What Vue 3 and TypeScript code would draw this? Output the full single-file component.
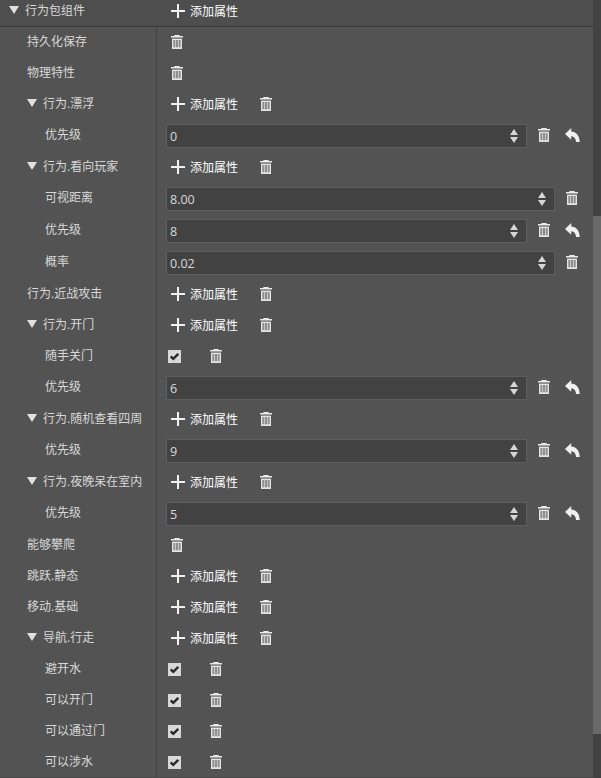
<script setup lang="ts">
type Kind = 'plain' | 'group' | 'check' | 'number'

interface Row {
  label: string
  level: 1 | 2
  kind: Kind
  open?: boolean
  value?: string
  revert?: boolean
}

const rows: Row[] = [
  { label: '持久化保存', level: 1, kind: 'plain' },
  { label: '物理特性', level: 1, kind: 'plain' },
  { label: '行为.漂浮', level: 1, kind: 'group', open: true },
  { label: '优先级', level: 2, kind: 'number', value: '0', revert: true },
  { label: '行为.看向玩家', level: 1, kind: 'group', open: true },
  { label: '可视距离', level: 2, kind: 'number', value: '8.00' },
  { label: '优先级', level: 2, kind: 'number', value: '8', revert: true },
  { label: '概率', level: 2, kind: 'number', value: '0.02' },
  { label: '行为.近战攻击', level: 1, kind: 'group' },
  { label: '行为.开门', level: 1, kind: 'group', open: true },
  { label: '随手关门', level: 2, kind: 'check' },
  { label: '优先级', level: 2, kind: 'number', value: '6', revert: true },
  { label: '行为.随机查看四周', level: 1, kind: 'group', open: true },
  { label: '优先级', level: 2, kind: 'number', value: '9', revert: true },
  { label: '行为.夜晚呆在室内', level: 1, kind: 'group', open: true },
  { label: '优先级', level: 2, kind: 'number', value: '5', revert: true },
  { label: '能够攀爬', level: 1, kind: 'plain' },
  { label: '跳跃.静态', level: 1, kind: 'group' },
  { label: '移动.基础', level: 1, kind: 'group' },
  { label: '导航.行走', level: 1, kind: 'group', open: true },
  { label: '避开水', level: 2, kind: 'check' },
  { label: '可以开门', level: 2, kind: 'check' },
  { label: '可以通过门', level: 2, kind: 'check' },
  { label: '可以涉水', level: 2, kind: 'check' },
]
</script>

<template>
  <svg class="defs" aria-hidden="true">
    <symbol id="trash" viewBox="0 0 12 14">
      <path d="M3.300 0h5.400v1H12v1.600H0V1h3.300z" fill="#ebebeb" />
      <path d="M1 3.600h10V14H1z" fill="#e4e4e4" />
      <path d="M2.600 5h1v7.200h-1zM4.800 5h.8v7.200h-.8zM6.400 5h.8v7.200h-.8zM8.400 5h1v7.200h-1z" fill="#555" />
    </symbol>
    <symbol id="plus" viewBox="0 0 14 14">
      <path d="M6 0h2v6h6v2H8v6H6V8H0V6h6z" fill="#f2f2f2" />
    </symbol>
    <symbol id="revert" viewBox="0 0 15 14">
      <path d="M0 5.900L6.200 0v3.400C11.200 3.700 14.700 7.500 14.700 14h-3.600C10.700 10.200 9.200 8.500 6.200 8.300v3.500z" fill="#f0f0f0" />
    </symbol>
    <symbol id="caret" viewBox="0 0 10 8">
      <path d="M0 0h10L5 8z" fill="#e0e0e0" />
    </symbol>
    <symbol id="spin" viewBox="0 0 8 14">
      <path d="M0 6l4-6 4 6zM0 8h8l-4 6z" fill="#d6d6d6" />
    </symbol>
    <symbol id="tick" viewBox="0 0 13 13">
      <path d="M2.700 6.300L5.300 8.900L10.300 3.900" fill="none" stroke="#292929" stroke-width="2.400" />
    </symbol>
  </svg>
  <div class="panel">
    <main class="tree">
      <header class="head">
        <div class="title"><svg class="caret"><use href="#caret" /></svg><span>行为包组件</span></div>
        <button class="add"><svg class="plus"><use href="#plus" /></svg><span>添加属性</span></button>
      </header>
      <div v-for="(row, i) in rows" :key="i" class="row" :class="row.kind">
        <div class="label" :class="'level' + row.level">
          <svg v-if="row.open" class="caret"><use href="#caret" /></svg><span>{{ row.label }}</span>
        </div>
        <div class="cell">
          <button v-if="row.kind === 'group'" class="add">
            <svg class="plus"><use href="#plus" /></svg><span>添加属性</span>
          </button>
          <span v-if="row.kind === 'check'" class="box"><svg><use href="#tick" /></svg></span>
          <div v-if="row.kind === 'number'" class="field">
            <span>{{ row.value }}</span><svg class="spin"><use href="#spin" /></svg>
          </div>
          <svg class="trash"><use href="#trash" /></svg>
          <svg v-if="row.revert" class="revert"><use href="#revert" /></svg>
        </div>
      </div>
    </main>
    <aside class="track"><div class="thumb"></div></aside>
  </div>
</template>

<style>
body {
  background: #535353;
  overflow: hidden;
}
</style>

<style scoped>
.defs {
  display: none;
}
.panel {
  display: flex;
  width: 601px;
  height: 778px;
  overflow: hidden;
  background: #535353;
  color: #d8d8d8;
  font: 12px/18px "Open Sans", "Noto Sans CJK SC", sans-serif;
}
.panel * {
  box-sizing: border-box;
}
.panel svg {
  display: block;
  flex: none;
}
.tree {
  width: 593px;
}
.head {
  display: flex;
  height: 27px;
  background: #4e4e4e;
  border-bottom: 1px solid #3b3b3b;
}
.title {
  display: flex;
  width: 171px;
  padding: 2px 0 0 9px;
}
.title .caret {
  margin: 4px 6px 0 0;
}
.head .add {
  margin-top: 3px;
}
.row {
  display: flex;
  height: 31px;
}
.row.number {
  height: 32px;
}
.row:last-child {
  border-bottom: 1px solid #484848;
}
.label {
  display: flex;
  width: 157px;
  padding-top: 6px;
  border-right: 1px solid #424242;
  white-space: nowrap;
}
.level1 {
  padding-left: 27px;
}
.level2 {
  padding-left: 45px;
}
.caret {
  width: 10px;
  height: 8px;
  margin: 4px 6px 0 0;
}
.cell {
  display: flex;
  flex: 1;
  padding: 8px 0 0 14px;
}
.add {
  display: flex;
  height: 18px;
  padding: 0;
  border: 0;
  background: none;
  color: #fff;
  font: inherit;
  white-space: nowrap;
}
.plus {
  width: 14px;
  height: 14px;
  margin: 1px 5px 0 0;
}
.group .cell {
  padding-top: 7px;
}
.trash {
  width: 12px;
  height: 14px;
}
.group .trash {
  margin: 1px 0 0 22px;
}
.check .cell {
  padding-left: 11px;
}
.box {
  width: 13px;
  height: 13px;
  margin: 1px 29px 0 0;
  background: #d8d8d8;
}
.box svg {
  width: 13px;
  height: 13px;
}
.number .cell {
  padding: 4px 15px 0 9px;
}
.field {
  display: flex;
  flex: 1;
  justify-content: space-between;
  height: 24px;
  padding: 3px 8px 0 3px;
  border: 1px solid #5e5e5e;
  background: #424242;
  font-family: "Open Sans", sans-serif;
  font-size: 12.5px;
}
.spin {
  width: 8px;
  height: 14px;
  margin-top: 1px;
}
.number .trash {
  margin: 4px 0 0 11px;
}
.revert {
  width: 15px;
  height: 14px;
  margin: 4px 0 0 15px;
}
.number .revert {
  margin-right: -2px;
}
.track {
  width: 8px;
  padding-top: 216px;
  background: #424242;
}
.thumb {
  height: 518px;
  background: #696969;
}
</style>
